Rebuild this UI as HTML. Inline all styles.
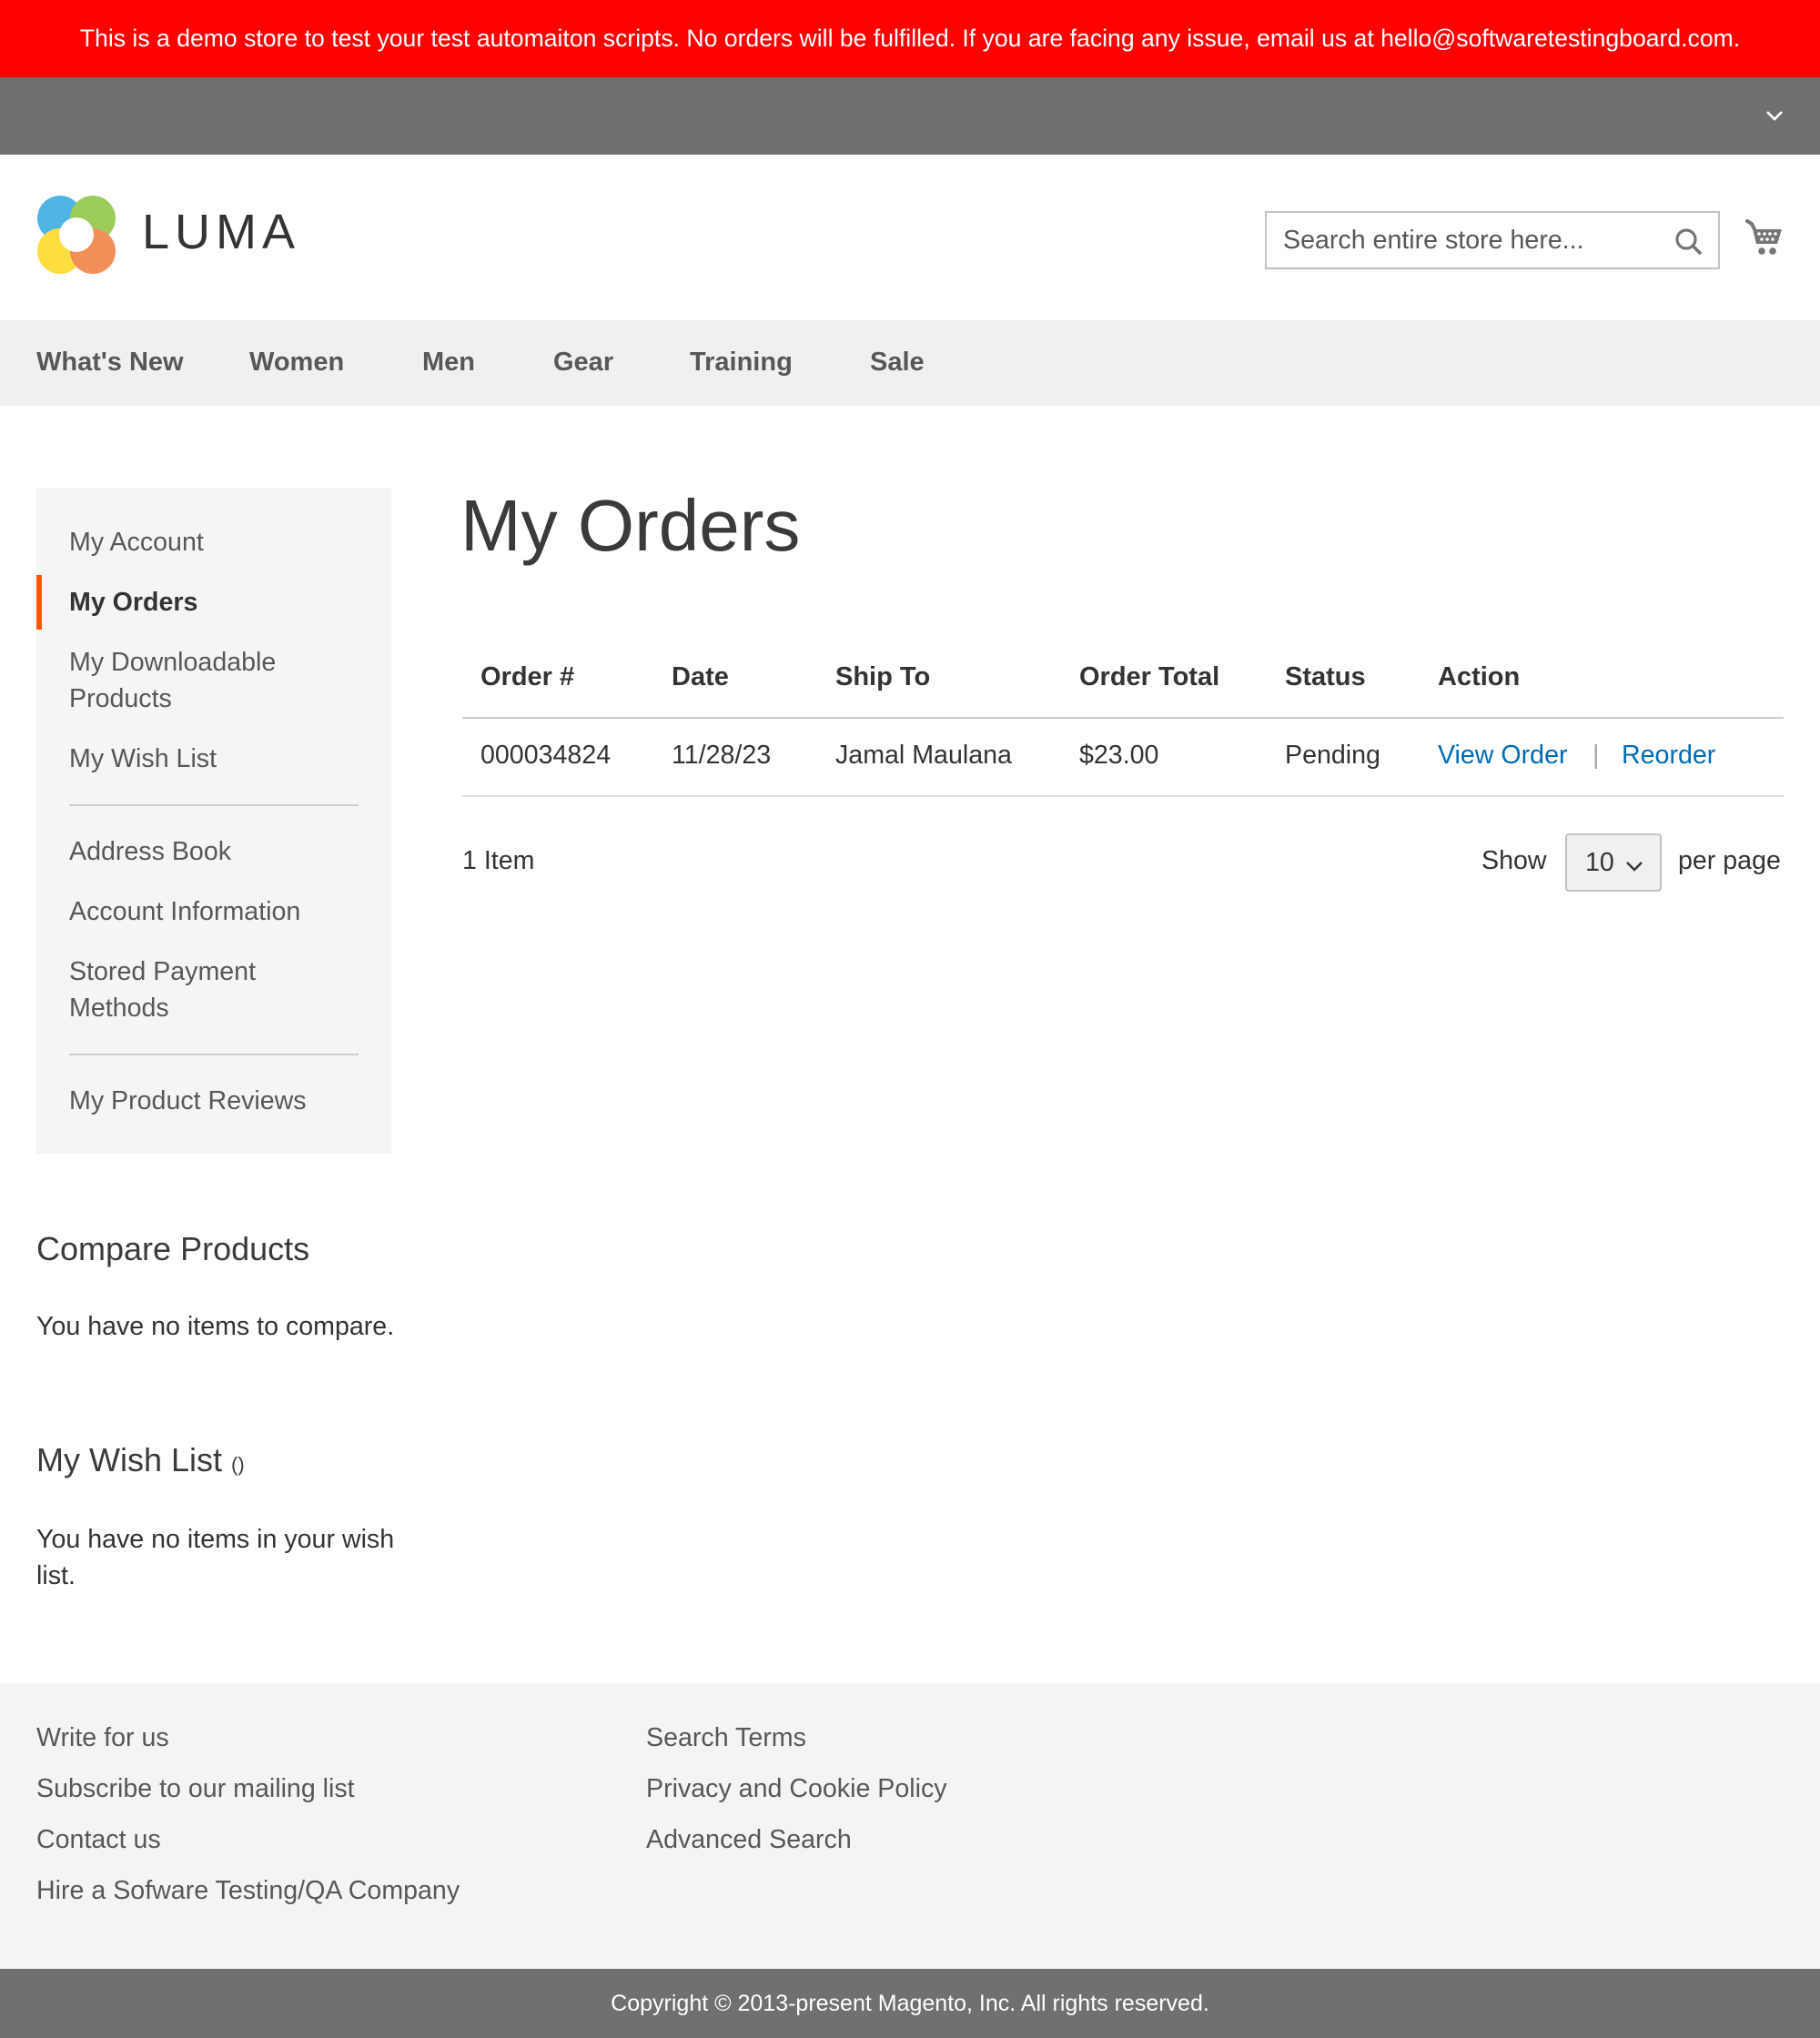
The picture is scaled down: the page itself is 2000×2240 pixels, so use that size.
<!DOCTYPE html>
<html><head><meta charset="utf-8">
<style>
html{zoom:2}
*{margin:0;padding:0;box-sizing:border-box}
body{width:1000px;height:1120px;position:relative;font-family:"Liberation Sans",sans-serif;color:#333;background:#fff;overflow:hidden;font-size:14px}
.a{position:absolute;white-space:nowrap}
.banner{left:0;top:0;width:1000px;height:42.5px;background:#ff0101;color:#fff;font-size:13.3px;text-align:center;line-height:42.5px}
.gray{left:0;top:42.5px;width:1000px;height:42.5px;background:#6e716e}
.nav{left:0;top:176px;width:1000px;height:47px;background:#f0f0f0}
.nav span{position:absolute;top:15px;font-weight:bold;color:#575757;font-size:14.5px}
.side{left:20px;top:268px;width:195px;height:366px;background:#f5f5f5}
.si{position:absolute;left:18px;font-size:14.3px;color:#575757;line-height:20px;white-space:nowrap}
.hr{position:absolute;left:18px;width:159px;height:1px;background:#ccc}
.th{position:absolute;top:364px;font-weight:bold;font-size:14.5px;color:#333}
.td{position:absolute;top:407px;font-size:14.3px;color:#333}
.lnk{color:#006bb4}
.ft{position:absolute;font-size:14.3px;color:#575757}
</style></head><body>
<div class="a banner">This is a demo store to test your test automaiton scripts. No orders will be fulfilled. If you are facing any issue, email us at hello@softwaretestingboard.com.</div>
<div class="a gray"><svg style="position:absolute;left:970px;top:18px" width="10" height="7" viewBox="0 0 10 7"><path d="M1 1l4 4 4-4" stroke="#fff" stroke-width="1.3" fill="none"/></svg></div>

<svg class="a" style="left:20px;top:107px" width="44" height="44" viewBox="0 0 44 44">
<g opacity="0.85">
<circle cx="13" cy="13" r="12.5" fill="#31a9e1"/>
<circle cx="31" cy="13" r="12.5" fill="#8bc53f"/>
<circle cx="13" cy="31" r="12.5" fill="#ffd81e"/>
<circle cx="31" cy="31" r="12.5" fill="#f07b3a"/>
</g>
<circle cx="22" cy="22" r="9.5" fill="#fff"/>
</svg>
<div class="a" style="left:78px;top:112px;font-size:27px;letter-spacing:3px;color:#333">LUMA</div>

<div class="a" style="left:695px;top:116px;width:250px;height:32px;border:1px solid #c2c2c2;background:#fff">
<span style="position:absolute;left:9px;top:7px;font-size:14.3px;color:#575757">Search entire store here...</span>
<svg style="position:absolute;left:224px;top:8px" width="16" height="16" viewBox="0 0 16 16"><circle cx="6.5" cy="6.5" r="5" stroke="#757575" stroke-width="1.6" fill="none"/><path d="M10 10l4.5 4.5" stroke="#757575" stroke-width="1.8"/></svg>
</div>
<svg class="a" style="left:958px;top:119px" width="22" height="22" viewBox="0 0 22 22">
<path d="M2 2.5l2.5 1.5 1.5 3" fill="none" stroke="#757575" stroke-width="2" stroke-linecap="round"/>
<path d="M5 7h16l-2.5 8H7z" fill="#757575"/>
<g fill="#fff"><circle cx="8.5" cy="9.5" r="0.9"/><circle cx="11.5" cy="9.5" r="0.9"/><circle cx="14.5" cy="9.5" r="0.9"/><circle cx="17.5" cy="9.5" r="0.9"/><circle cx="10" cy="12.5" r="0.9"/><circle cx="13" cy="12.5" r="0.9"/><circle cx="16" cy="12.5" r="0.9"/></g>
<circle cx="10" cy="19" r="1.9" fill="#757575"/><circle cx="16" cy="19" r="1.9" fill="#757575"/></svg>

<div class="a nav"><span style="left:20px">What's New</span><span style="left:137px">Women</span><span style="left:232px">Men</span><span style="left:304px">Gear</span><span style="left:379px">Training</span><span style="left:478px">Sale</span></div>

<div class="a side">
<div class="si" style="top:20px">My Account</div>
<div style="position:absolute;left:0;top:48px;width:3px;height:30px;background:#ff5501"></div>
<div class="si" style="top:53px;color:#333;font-weight:bold">My Orders</div>
<div class="si" style="top:86px">My Downloadable<br>Products</div>
<div class="si" style="top:139px">My Wish List</div>
<div class="hr" style="top:174px"></div>
<div class="si" style="top:190px">Address Book</div>
<div class="si" style="top:223px">Account Information</div>
<div class="si" style="top:256px">Stored Payment<br>Methods</div>
<div class="hr" style="top:311px"></div>
<div class="si" style="top:327px">My Product Reviews</div>
</div>

<div class="a" style="left:253px;top:266px;font-size:40px;color:#3a3a3a">My Orders</div>

<div class="th" style="left:264px">Order #</div>
<div class="th" style="left:369px">Date</div>
<div class="th" style="left:459px">Ship To</div>
<div class="th" style="left:593px">Order Total</div>
<div class="th" style="left:706px">Status</div>
<div class="th" style="left:790px">Action</div>
<div class="a" style="left:254px;top:394px;width:726px;height:1px;background:#ccc"></div>
<div class="td" style="left:264px">000034824</div>
<div class="td" style="left:369px">11/28/23</div>
<div class="td" style="left:459px">Jamal Maulana</div>
<div class="td" style="left:593px">$23.00</div>
<div class="td" style="left:706px">Pending</div>
<div class="td lnk" style="left:790px">View Order</div>
<div class="td" style="left:875px;color:#a6a6a6">|</div>
<div class="td lnk" style="left:891px">Reorder</div>
<div class="a" style="left:254px;top:437px;width:726px;height:1px;background:#ddd"></div>

<div class="a" style="left:254px;top:465px;font-size:14.3px">1 Item</div>
<div class="a" style="left:814px;top:465px;font-size:14.3px">Show</div>
<div class="a" style="left:860px;top:458px;width:53px;height:32px;border:1px solid #c2c2c2;border-radius:2px;background:#f0f0f0">
<span style="position:absolute;left:10px;top:7px;font-size:14.3px">10</span>
<svg style="position:absolute;left:32px;top:14px" width="10" height="6" viewBox="0 0 10 6"><path d="M1 1l4 4 4-4" stroke="#333" stroke-width="1.2" fill="none"/></svg>
</div>
<div class="a" style="left:922px;top:465px;font-size:14.3px">per page</div>

<div class="a" style="left:20px;top:676px;font-size:18px;color:#3a3a3a">Compare Products</div>
<div class="a" style="left:20px;top:721px;font-size:14.3px">You have no items to compare.</div>
<div class="a" style="left:20px;top:792px;font-size:18px;color:#3a3a3a">My Wish List <span style="font-size:11px">()</span></div>
<div class="a" style="left:20px;top:836px;font-size:14.3px;line-height:20px">You have no items in your wish<br>list.</div>

<div class="a" style="left:0;top:925px;width:1000px;height:157px;background:#f4f4f4">
<div class="ft" style="left:20px;top:22px">Write for us</div>
<div class="ft" style="left:20px;top:50px">Subscribe to our mailing list</div>
<div class="ft" style="left:20px;top:78px">Contact us</div>
<div class="ft" style="left:20px;top:106px">Hire a Sofware Testing/QA Company</div>
<div class="ft" style="left:355px;top:22px">Search Terms</div>
<div class="ft" style="left:355px;top:50px">Privacy and Cookie Policy</div>
<div class="ft" style="left:355px;top:78px">Advanced Search</div>
</div>
<div class="a" style="left:0;top:1082px;width:1000px;height:38px;background:#6e716e;color:#fff;font-size:12.5px;text-align:center;line-height:38px">Copyright © 2013-present Magento, Inc. All rights reserved.</div>
</body></html>
